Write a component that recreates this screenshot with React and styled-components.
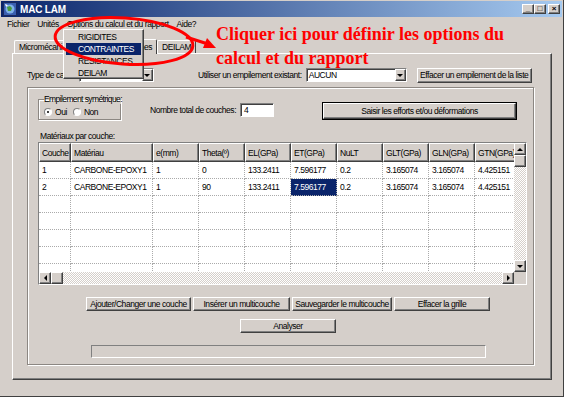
import React from 'react';
import styled, { createGlobalStyle, css } from 'styled-components';

const ui = '"Liberation Sans", Arial, sans-serif';
const face = '#d5cfca';
const navy = '#0a246a';

const GlobalStyle = createGlobalStyle`
  html, body { margin: 0; padding: 0; background: #fff; }
  body { font-family: ${ui}; font-size: 8.5px; letter-spacing: -0.45px; color: #000; }
  * { box-sizing: border-box; }
`;

const raised = css`
  border: 1px solid;
  border-color: #fff #404040 #404040 #fff;
  box-shadow: inset -1px -1px 0 #808080;
`;

const sunken = css`
  border: 1px solid;
  border-color: #808080 #fff #fff #808080;
  box-shadow: inset 1px 1px 0 #404040;
`;

const Window = styled.div`
  position: relative;
  width: 564px;
  height: 397px;
  background: ${face};
  border-right: 1px solid #404040;
  border-bottom: 1px solid #404040;
  display: flex;
  flex-direction: column;
  overflow: hidden;
`;

const TitleBar = styled.div`
  margin: 1px 1px 0;
  height: 16px;
  padding: 0 2px;
  display: flex;
  align-items: center;
  background: linear-gradient(to right, ${navy}, #a6caf0);
`;

const Title = styled.span`
  margin-left: 3px;
  color: #fff;
  font-weight: bold;
  font-size: 10px;
  letter-spacing: -0.2px;
`;

const WinButtons = styled.div`
  margin-left: auto;
  display: flex;
`;

const WinButton = styled.div`
  ${raised};
  width: 12px;
  height: 10px;
  background: ${face};
  margin-left: ${(p) => (p.$gap ? '2px' : '0')};
  display: flex;
  align-items: center;
  justify-content: center;
  font-size: 8px;
  line-height: 1;
  font-weight: bold;
  letter-spacing: 0;
`;

const MenuBar = styled.div`
  height: 13px;
  margin-top: 1px;
  padding-left: 3px;
  display: flex;
  align-items: center;
`;

const MenuItem = styled.span`
  padding: 0 4px;
  line-height: 13px;
`;

const TabStrip = styled.div`
  margin-top: 9px;
  padding-left: 14px;
  height: 13px;
  display: flex;
  align-items: flex-end;
  position: relative;
  z-index: 1;
`;

const Tab = styled.div`
  height: ${(p) => (p.$active ? '15px' : '13px')};
  margin-bottom: ${(p) => (p.$active ? '-1px' : '0')};
  padding: 0 4px;
  display: flex;
  align-items: center;
  white-space: nowrap;
  background: ${face};
  border: 1px solid;
  border-bottom: none;
  border-color: #fff #404040 #404040 #fff;
  border-radius: 2px 2px 0 0;
`;

const TabPanel = styled.div`
  flex: 1;
  margin: 0 11px 16px 12px;
  border: 1px solid;
  border-color: #fff #404040 #404040 #fff;
  box-shadow: inset -1px -1px 0 #808080;
  padding: 13px 17px 14px 14px;
  display: flex;
  flex-direction: column;
`;

const TopRow = styled.div`
  height: 16px;
  display: flex;
  align-items: center;
`;

const Label = styled.span`
  white-space: nowrap;
  margin-left: ${(p) => p.$ml || 0}px;
  margin-top: ${(p) => p.$mt || 0}px;
`;

const Combo = styled.div`
  ${sunken};
  width: ${(p) => p.$w}px;
  height: 14px;
  margin-left: ${(p) => p.$ml || 0}px;
  background: #fff;
  display: flex;
  align-items: center;
  padding-left: 2px;
`;

const ComboText = styled.span`
  flex: 1;
`;

const DropButton = styled.div`
  ${raised};
  width: 11px;
  height: 12px;
  background: ${face};
  display: flex;
  align-items: center;
  justify-content: center;
`;

const Arrow = styled.span`
  width: 0;
  height: 0;
  border: 3px solid transparent;
  ${(p) => p.$dir === 'down' && 'border-top: 3px solid #000; border-bottom: 0; margin-top: 1px;'}
  ${(p) => p.$dir === 'up' && 'border-bottom: 3px solid #000; border-top: 0;'}
  ${(p) => p.$dir === 'left' && 'border-right: 3px solid #000; border-left: 0;'}
  ${(p) => p.$dir === 'right' && 'border-left: 3px solid #000; border-right: 0;'}
`;

const Button = styled.div`
  ${raised};
  width: ${(p) => p.$w}px;
  height: ${(p) => p.$h || 14}px;
  margin-left: ${(p) => p.$ml || 0}px;
  margin-top: ${(p) => p.$mt || 0}px;
  background: ${face};
  display: flex;
  align-items: center;
  justify-content: center;
  white-space: nowrap;
  ${(p) =>
    p.$default &&
    css`
      outline: 1px solid #000;
    `}
`;

const Frame = styled.div`
  flex: 1;
  margin-top: 4px;
  border: 1px solid #8c8782;
  box-shadow: inset 1px 1px 0 #fff, 1px 1px 0 #fff;
  padding: 10px 7px 6px 10px;
  display: flex;
  flex-direction: column;
`;

const OptionsRow = styled.div`
  height: 22px;
  display: flex;
  align-items: flex-start;
`;

const Group = styled.fieldset`
  margin: -3px 0 0;
  min-width: 0;
  width: 83px;
  flex: none;
  height: 25px;
  padding: 0 4px 0 5px;
  border: 1px solid #8c8782;
  box-shadow: inset 1px 1px 0 #fff, 1px 1px 0 #fff;
  display: flex;
  align-items: center;
  gap: 6px;
`;

const Legend = styled.legend`
  padding: 0;
  margin-left: 0;
  line-height: 9px;
  white-space: nowrap;
  letter-spacing: -0.6px;
`;

const Radio = styled.span`
  display: flex;
  align-items: center;
  gap: 3px;
`;

const RadioDot = styled.span`
  width: 8px;
  height: 8px;
  border-radius: 50%;
  background: #fff;
  border: 1px solid;
  border-color: #808080 #fff #fff #808080;
  display: flex;
  align-items: center;
  justify-content: center;
  &::after {
    content: '';
    width: 2px;
    height: 2px;
    border-radius: 50%;
    background: ${(p) => (p.$on ? '#000' : 'transparent')};
  }
`;

const TextInput = styled.div`
  ${sunken};
  width: 34px;
  height: 14px;
  margin-left: 4px;
  margin-top: 5px;
  background: #fff;
  padding-left: 3px;
  display: flex;
  align-items: center;
`;

const Caption = styled.div`
  margin-top: 10px;
  padding-left: 2px;
  height: 12px;
  line-height: 12px;
`;

const GridBox = styled.div`
  ${sunken};
  width: 489px;
  height: 143px;
  display: grid;
  grid-template-columns: 1fr 12px;
  grid-template-rows: 1fr 12px;
  background: #fff;
`;

const Table = styled.div`
  overflow: hidden;
  display: grid;
  grid-template-columns: 32px 82px repeat(8, 46px);
  grid-template-rows: 19px;
  grid-auto-rows: 17px;
`;

const HeadCell = styled.div`
  ${raised};
  background: ${face};
  padding: 0 2px;
  display: flex;
  align-items: center;
  white-space: nowrap;
  overflow: hidden;
`;

const Cell = styled.div`
  border-right: 1px dotted #aaa;
  border-bottom: 1px dotted #aaa;
  padding: 0 3px;
  display: flex;
  align-items: center;
  white-space: nowrap;
  overflow: hidden;
  background: ${(p) => (p.$sel ? navy : '#fff')};
  color: ${(p) => (p.$sel ? '#fff' : '#000')};
`;

const track = css`
  background: repeating-conic-gradient(#fff 0 25%, ${face} 0 50%) 0 0 / 2px 2px;
`;

const VScroll = styled.div`
  ${track};
  display: flex;
  flex-direction: column;
  justify-content: space-between;
`;

const HScroll = styled.div`
  ${track};
  display: flex;
  justify-content: space-between;
`;

const ScrollEnd = styled.div`
  display: flex;
  flex-direction: ${(p) => (p.$vertical ? 'column' : 'row')};
`;

const ScrollBtn = styled.div`
  ${raised};
  width: 12px;
  height: 12px;
  background: ${face};
  display: flex;
  align-items: center;
  justify-content: center;
`;

const Corner = styled.div`
  background: ${face};
`;

const BottomArea = styled.div`
  display: flex;
  flex-direction: column;
  align-items: center;
  padding-left: 12px;
`;

const ButtonRow = styled.div`
  margin-top: 12px;
  display: flex;
  gap: 2px;
`;

const Progress = styled.div`
  margin-top: 12px;
  width: 395px;
  height: 13px;
  border: 1px solid;
  border-color: #808080 #fff #fff #808080;
`;

const DropMenu = styled.div`
  ${raised};
  position: absolute;
  left: 63px;
  top: 29px;
  width: 81px;
  height: 50px;
  background: ${face};
  padding: 1px 2px;
  z-index: 5;
`;

const DropItem = styled.div`
  height: 12px;
  line-height: 12px;
  padding-left: 12px;
  background: ${(p) => (p.$hl ? navy : 'transparent')};
  color: ${(p) => (p.$hl ? '#fff' : '#000')};
`;

const Annotation = styled.svg`
  position: absolute;
  left: 0;
  top: 0;
  z-index: 6;
  pointer-events: none;
`;

const Note = styled.div`
  position: absolute;
  left: 216px;
  top: 22px;
  z-index: 6;
  color: #ff0000;
  font-family: "Liberation Serif", "Times New Roman", serif;
  font-weight: bold;
  font-size: 18px;
  line-height: 24px;
  letter-spacing: 0;
  white-space: nowrap;
`;

const AppIcon = () => (
  <svg width="14" height="14" viewBox="0 0 14 14">
    <rect x="0.5" y="0.5" width="13" height="13" fill="#3a5fb0" stroke="#1a2a60" />
    <circle cx="7" cy="7" r="4.5" fill="#7fb2e8" />
    <path d="M4 5 L7 4 L9 6 L8 9 L5 9 Z" fill="#4a9a3a" />
    <path d="M2 2 L5 3 L3 5 Z" fill="#fff" />
  </svg>
);

const columns = ['Couche', 'Matériau', 'e(mm)', 'Theta(º)', 'EL(GPa)', 'ET(GPa)', 'NuLT', 'GLT(GPa)', 'GLN(GPa)', 'GTN(GPa)'];

const rows = [
  ['1', 'CARBONE-EPOXY1', '1', '0', '133.2411', '7.596177', '0.2', '3.165074', '3.165074', '4.425151'],
  ['2', 'CARBONE-EPOXY1', '1', '90', '133.2411', '7.596177', '0.2', '3.165074', '3.165074', '4.425151'],
  ...Array.from({ length: 5 }, () => Array(10).fill('')),
];

export default function App() {
  return (
    <>
      <GlobalStyle />
      <Window>
        <TitleBar>
          <AppIcon />
          <Title>MAC LAM</Title>
          <WinButtons>
            <WinButton>_</WinButton>
            <WinButton>□</WinButton>
            <WinButton $gap>×</WinButton>
          </WinButtons>
        </TitleBar>

        <MenuBar>
          <MenuItem>Fichier</MenuItem>
          <MenuItem>Unités</MenuItem>
          <MenuItem>Options du calcul et du rapport</MenuItem>
          <MenuItem>Aide?</MenuItem>
        </MenuBar>

        <TabStrip>
          <Tab>Micromécanique</Tab>
          <Tab $active>Calcul multicouches</Tab>
          <Tab>DEILAM</Tab>
        </TabStrip>

        <TabPanel>
          <TopRow>
            <Label>Type de calcul:</Label>
            <Combo $w={75} $ml={2}>
              <ComboText>RIGIDITES</ComboText>
              <DropButton><Arrow $dir="down" /></DropButton>
            </Combo>
            <Label $ml={44}>Utiliser un empilement existant:</Label>
            <Combo $w={101} $ml={4}>
              <ComboText>AUCUN</ComboText>
              <DropButton><Arrow $dir="down" /></DropButton>
            </Combo>
            <Button $w={115} $h={15} $ml={10}>Effacer un empilement de la liste</Button>
          </TopRow>

          <Frame>
            <OptionsRow>
              <Group>
                <Legend>Empilement symétrique:</Legend>
                <Radio><RadioDot $on />Oui</Radio>
                <Radio><RadioDot />Non</Radio>
              </Group>
              <Label $ml={29} $mt={7}>Nombre total de couches:</Label>
              <TextInput>4</TextInput>
              <Button $w={193} $h={16} $ml={49} $mt={5} $default>
                Saisir les efforts et/ou déformations
              </Button>
            </OptionsRow>

            <Caption>Matériaux par couche:</Caption>

            <GridBox>
              <Table>
                {columns.map((c) => (
                  <HeadCell key={c}>{c}</HeadCell>
                ))}
                {rows.map((r, i) =>
                  r.map((v, j) => (
                    <Cell key={`${i}-${j}`} $sel={i === 1 && j === 5}>{v}</Cell>
                  ))
                )}
              </Table>
              <VScroll>
                <ScrollEnd $vertical>
                  <ScrollBtn><Arrow $dir="up" /></ScrollBtn>
                  <ScrollBtn />
                </ScrollEnd>
                <ScrollBtn><Arrow $dir="down" /></ScrollBtn>
              </VScroll>
              <HScroll>
                <ScrollEnd>
                  <ScrollBtn><Arrow $dir="left" /></ScrollBtn>
                  <ScrollBtn />
                </ScrollEnd>
                <ScrollBtn><Arrow $dir="right" /></ScrollBtn>
              </HScroll>
              <Corner />
            </GridBox>

            <BottomArea>
              <ButtonRow>
                <Button $w={105}>Ajouter/Changer une couche</Button>
                <Button $w={97}>Insérer un multicouche</Button>
                <Button $w={100}>Sauvegarder le multicouche</Button>
                <Button $w={96}>Effacer la grille</Button>
              </ButtonRow>
              <Button $w={96} $h={14} $mt={8}>Analyser</Button>
              <Progress />
            </BottomArea>
          </Frame>
        </TabPanel>

        <DropMenu>
          <DropItem>RIGIDITES</DropItem>
          <DropItem $hl>CONTRAINTES</DropItem>
          <DropItem>RESISTANCES</DropItem>
          <DropItem>DEILAM</DropItem>
        </DropMenu>

        <Annotation width="564" height="100" viewBox="0 0 564 100">
          <ellipse cx="124" cy="41" rx="69" ry="23" fill="none" stroke="#ff0000" strokeWidth="3" transform="rotate(4 124 41)" />
          <line x1="186" y1="37" x2="208" y2="44" stroke="#ff0000" strokeWidth="3" />
          <polygon points="216,48 203,48 207,38" fill="#ff0000" />
        </Annotation>
        <Note>
          Cliquer ici pour définir les options du
          <br />
          calcul et du rapport
        </Note>
      </Window>
    </>
  );
}
